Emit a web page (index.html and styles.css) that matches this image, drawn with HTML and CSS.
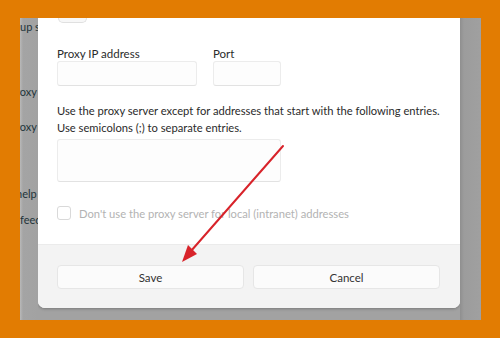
FILE: index.html
```html
<!DOCTYPE html>
<html lang="en">
<head>
  <meta charset="UTF-8">
  <title>Proxy settings</title>
  <link rel="stylesheet" href="styles.css">
</head>
<body>
  <div class="shot">
    <div class="behind">
      <div class="bg-text t1">up s</div>
      <div class="bg-text t2">roxy</div>
      <div class="bg-text t3">roxy</div>
      <div class="bg-text t4">help</div>
      <div class="bg-text t5">feed</div>
    </div>

    <div class="dialog">
      <div class="body">
        <div class="toggle-stub"></div>

        <div class="row">
          <div class="field">
            <div class="label">Proxy IP address</div>
            <div class="input ip"></div>
          </div>
          <div class="field">
            <div class="label">Port</div>
            <div class="input port"></div>
          </div>
        </div>

        <p class="hint">Use the proxy server except for addresses that start with the following entries.<br>Use semicolons (;) to separate entries.</p>
        <div class="input area"></div>

        <div class="check-row">
          <span class="checkbox"></span>
          <span class="check-label">Don't use the proxy server for local (intranet) addresses</span>
        </div>
      </div>

      <div class="footer">
        <button class="btn">Save</button>
        <button class="btn">Cancel</button>
      </div>
    </div>

    <div class="side"></div>
  </div>

  <svg class="arrow" width="500" height="338" viewBox="0 0 500 338">
    <line x1="283" y1="146" x2="191" y2="251" stroke="#d8232a" stroke-width="2" stroke-linecap="round"/>
    <polygon points="182,262 197,254 188,245" fill="#d8232a"/>
  </svg>
</body>
</html>
```

FILE: styles.css
```css
body { margin: 0; background: #e27c02; font-family: "Lato", "Liberation Sans", sans-serif; width: 500px; height: 338px; overflow: hidden; position: relative; }

.shot { margin: 18px 0 0 20px; width: 461px; height: 302px; background: #a2a2a2; display: flex; overflow: hidden; }

.behind { width: 18px; flex: none; position: relative; background: linear-gradient(to right, #b9b9b9 0, #a4a4a4 3px, #a2a2a2 100%); overflow: hidden; }
.bg-text { position: absolute; font-size: 11px; color: #22343a; white-space: nowrap; line-height: 14px; }
.t1 { top: 2px; left: 0; }
.t2 { top: 67px; left: -4px; }
.t3 { top: 102px; left: -4px; }
.t4 { top: 169px; left: -4px; }
.t5 { top: 195px; left: 0; }

.dialog { width: 422px; height: 290px; flex: none; background: #fff; border-radius: 0 0 7px 7px; display: flex; flex-direction: column; box-shadow: 0 1px 3px rgba(0,0,0,0.25); }
.body { flex: 1; padding: 0 19px; }
.toggle-stub { width: 27px; height: 4px; margin-left: 1px; border: 1px solid #e0e0e0; border-top: none; border-radius: 0 0 6px 6px; background: #f7f7f7; }

.row { display: flex; gap: 16px; margin-top: 24px; }
.label { font-size: 11.5px; color: #2b2b2b; line-height: 14px; }
.input { border: 1px solid #ececec; border-bottom-color: #e2e2e2; border-radius: 3px; background: #fdfdfd; box-sizing: border-box; }
.ip { width: 140px; height: 25px; }
.port { width: 68px; height: 25px; }

.hint { margin: 16px 0 0; font-size: 11.2px; line-height: 17px; color: #2b2b2b; white-space: nowrap; }
.area { width: 224px; height: 43px; margin-top: 3px; }

.check-row { display: flex; align-items: center; gap: 8px; margin-top: 24px; }
.checkbox { width: 14px; height: 14px; border: 1px solid #d9d9d9; border-radius: 3px; box-sizing: border-box; }
.check-label { font-size: 11.2px; color: #b3b3b3; }

.footer { height: 64px; flex: none; background: #f3f3f3; border-top: 1px solid #ebebeb; border-radius: 0 0 7px 7px; box-sizing: border-box; padding: 20px 20px 0 19px; display: flex; gap: 9px; align-items: flex-start; }
.btn { flex: 1; height: 24px; background: #fbfbfb; border: 1px solid #e6e6e6; border-radius: 4px; font-family: inherit; font-size: 11.5px; color: #333; padding: 0; }

.side { flex: 1; background: linear-gradient(to right, #8f8f8f 0, #9c9c9c 4px, #a0a0a0 100%); }

.arrow { position: absolute; left: 0; top: 0; pointer-events: none; }
```
